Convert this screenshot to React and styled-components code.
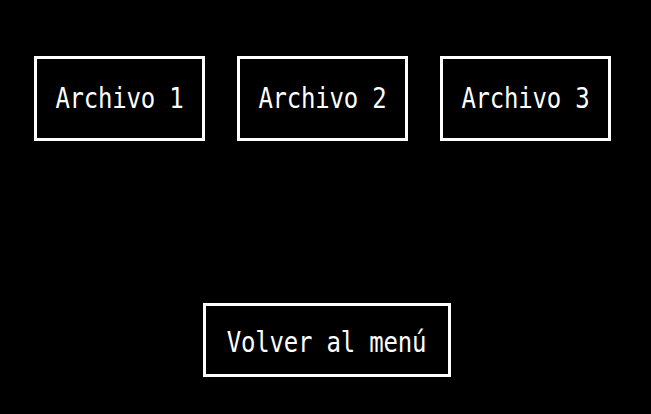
import React from "react";
import styled, { createGlobalStyle } from "styled-components";

const Global = createGlobalStyle`
  html, body { margin: 0; padding: 0; background: #000; }
  body { font-family: "DejaVu Sans Mono", "Liberation Mono", monospace; }
`;

const Page = styled.div`
  width: 651px;
  height: 414px;
  background: #000;
  display: flex;
  flex-direction: column;
  padding-top: 56px;
  box-sizing: border-box;
`;

const Row = styled.div`
  display: flex;
  gap: 32px;
  padding-left: 34px;
`;

const Box = styled.button`
  box-sizing: border-box;
  width: ${(p) => p.$w}px;
  height: ${(p) => p.$h}px;
  border: 3px solid #fff;
  background: #000;
  color: #fff;
  font-family: "DejaVu Sans Mono", "Liberation Mono", monospace;
  font-size: 24px;
  letter-spacing: -0.2px;
  display: flex;
  align-items: center;
  justify-content: center;
  padding: 0;
  margin: 0;
  cursor: pointer;
`;

const Label = styled.span`
  display: inline-block;
  transform: scaleY(1.15);
  padding-top: ${(p) => p.$offset || 0}px;
`;

const Bottom = styled.div`
  display: flex;
  justify-content: center;
  margin-top: 162px;
  padding-left: 2px;
`;

export default function App() {
  return (
    <>
      <Global />
      <Page>
        <Row>
          {["Archivo 1", "Archivo 2", "Archivo 3"].map((t) => (
            <Box key={t} $w={171} $h={85}>
              <Label>{t}</Label>
            </Box>
          ))}
        </Row>
        <Bottom>
          <Box $w={248} $h={74}>
            <Label $offset={4}>Volver al menú</Label>
          </Box>
        </Bottom>
      </Page>
    </>
  );
}
